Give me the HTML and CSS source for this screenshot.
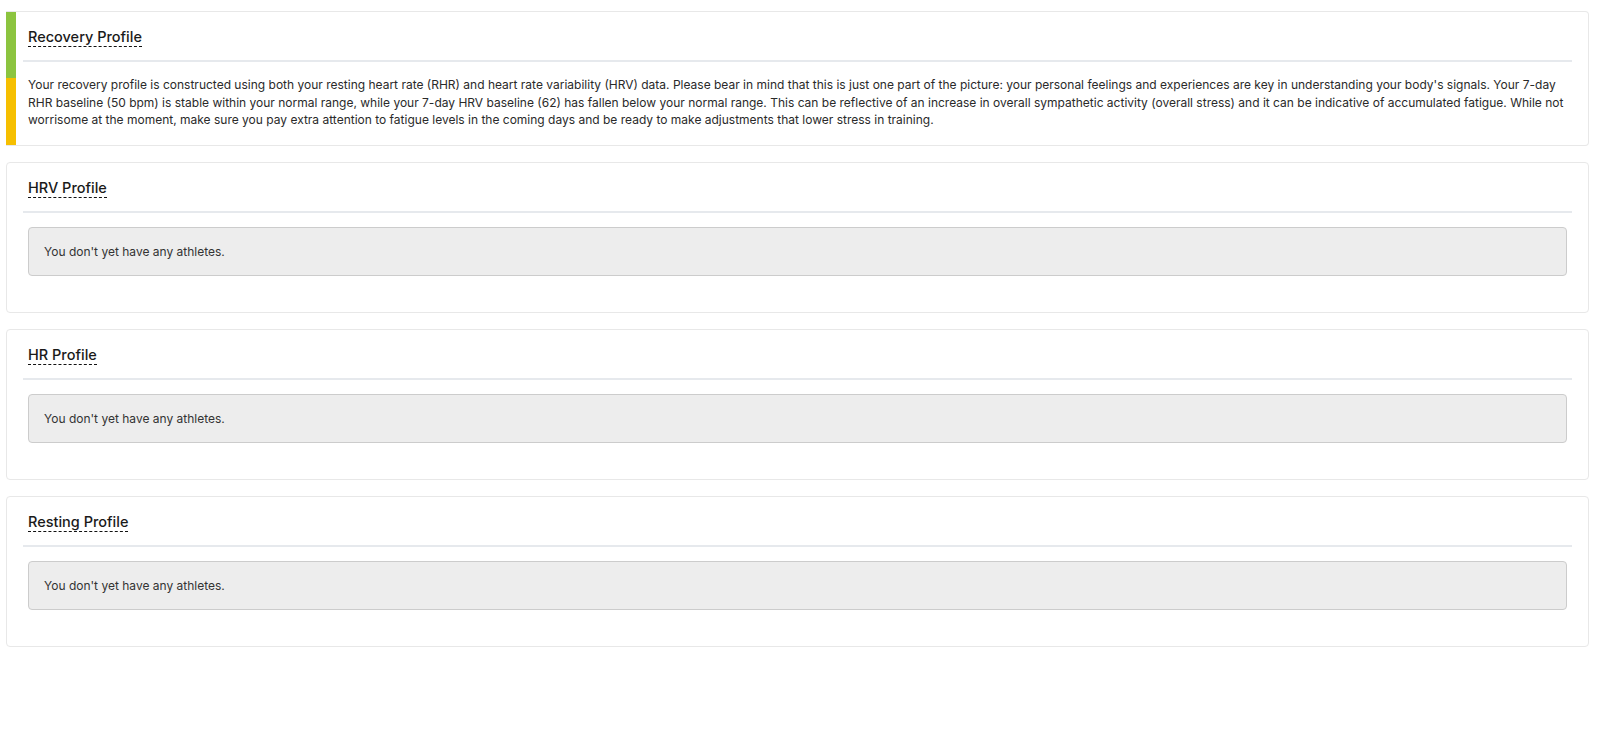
FILE: index.html
```html
<!DOCTYPE html>
<html lang="en">

<head>
    <meta charset="UTF-8">
    <meta name="viewport" content="width=device-width, initial-scale=1.0">
    <title>Recovery Profile</title>
    <link rel="stylesheet" href="styles.css">
</head>

<body>
    <div class="page">
        <div class="card card-status">
            <div class="card-header">
                <span class="card-title">Recovery Profile</span>
            </div>
            <p class="summary">Your recovery profile is constructed using both your resting heart rate (RHR) and heart rate variability (HRV) data. Please bear in mind that this is just one part of the picture: your personal feelings and experiences are key in understanding your body's signals. Your 7-day RHR baseline (50 bpm) is stable within your normal range, while your 7-day HRV baseline (62) has fallen below your normal range. This can be reflective of an increase in overall sympathetic activity (overall stress) and it can be indicative of accumulated fatigue. While not worrisome at the moment, make sure you pay extra attention to fatigue levels in the coming days and be ready to make adjustments that lower stress in training.</p>
        </div>

        <div class="card">
            <div class="card-header">
                <span class="card-title">HRV Profile</span>
            </div>
            <div class="empty">You don't yet have any athletes.</div>
        </div>

        <div class="card">
            <div class="card-header">
                <span class="card-title">HR Profile</span>
            </div>
            <div class="empty">You don't yet have any athletes.</div>
        </div>

        <div class="card">
            <div class="card-header">
                <span class="card-title">Resting Profile</span>
            </div>
            <div class="empty">You don't yet have any athletes.</div>
        </div>
    </div>
</body>

</html>
```

FILE: styles.css
```css
body {
    font-family: Inter, "Noto Sans", sans-serif;
    background-color: #fff;
    color: #2a2a2a;
    margin: 0;
    padding: 0;
}

.page {
    padding: 11px 10px 0 6px;
}

.card {
    background-color: #fff;
    border: 1px solid #e8e8e8;
    border-radius: 4px;
    padding: 0 16px 16px;
    margin-bottom: 16px;
}

/* barra de estado a la izquierda */
.card-status {
    border-left: none;
    border-radius: 0 4px 4px 0;
    padding-left: 17px;
    background: linear-gradient(to bottom, #8cc43f 50%, #f6bf00 50%) left top / 10px 100% no-repeat, #fff;
}

.card-header {
    padding: 14px 5px 12px;
    border-bottom: 2px solid #e6e9ed;
}

.card-title {
    font-size: 14.5px;
    line-height: 22px;
    font-weight: 500;
    color: #1a1a1a;
    padding-bottom: 1px;
    border-bottom: 1px dashed #111;
}

.summary {
    margin: 14px 0 0;
    padding: 0 5px;
    font-size: 12px;
    line-height: 17.5px;
    color: #2a2a2a;
}

.empty {
    margin: 14px 5px 20px;
    padding: 15px;
    background-color: #ededed;
    border: 1px solid #cccccc;
    border-radius: 4px;
    font-size: 12px;
    line-height: 17px;
    color: #333;
}
```
